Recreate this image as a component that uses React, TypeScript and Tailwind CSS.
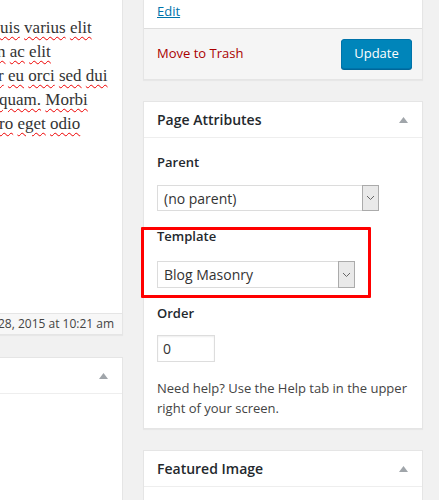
import React from "react";

const sans = { fontFamily: '"Open Sans", "Noto Sans", sans-serif' };
const serif = { fontFamily: '"Liberation Serif", "DejaVu Serif", serif' };

function Words({ text }: { text: string }) {
  const parts = text.split(" ");
  return (
    <>
      {parts.map((w, i) => (
        <React.Fragment key={i}>
          <span className="underline decoration-wavy decoration-[#e00] decoration-1 underline-offset-[3px]">{w}</span>
          {i < parts.length - 1 ? " " : ""}
        </React.Fragment>
      ))}
    </>
  );
}

function Triangle() {
  return (
    <svg width="9" height="6" viewBox="0 0 9 6" className="block">
      <path d="M4.5 0 L9 6 L0 6 Z" fill="#a0a5aa" />
    </svg>
  );
}

function Chevron() {
  return (
    <svg width="9" height="6" viewBox="0 0 9 6" className="block">
      <path d="M1 1 L4.5 4.5 L8 1" fill="none" stroke="#666" strokeWidth="1" />
    </svg>
  );
}

function Select({ label, w, h }: { label: string; w: string; h: string }) {
  return (
    <div className={`flex ${w} ${h} border border-[#dcdcdc] bg-white`}>
      <div className="flex-1 flex items-center pl-[6px] text-[14px] text-[#333]">{label}</div>
      <div className="w-[17px] flex items-center justify-center bg-[#e9e9e9] border border-[#ababab] -my-px -mr-px">
        <Chevron />
      </div>
    </div>
  );
}

export default function App() {
  return (
    <div className="w-[439px] h-[500px] overflow-hidden bg-[#f1f1f1] flex" style={sans}>
      {/* Left column */}
      <div className="w-[123px] flex flex-col shrink-0">
        <div className="h-[313px] bg-white border-r border-[#e5e5e5] pt-[16px] text-[17px] leading-[24px] text-[#333] whitespace-nowrap overflow-hidden" style={serif}>
          <div><Words text="uis varius elit" /></div>
          <div className="ml-[-3px]"><Words text="n ac elit" /></div>
          <div className="ml-[-2px]"><Words text="r eu orci sed dui" /></div>
          <div className="ml-[-1px]"><Words text="quam. Morbi" /></div>
          <div className="ml-[-1px]"><Words text="ro eget odio" /></div>
        </div>
        <div className="h-[22px] bg-[#f7f7f7] border-t border-b border-r border-[#e5e5e5] flex items-center overflow-hidden whitespace-nowrap text-[12px] text-[#444] shadow-[0_1px_1px_rgba(0,0,0,0.04)]">
          <span className="ml-[-2px]">28, 2015 at 10:21 am</span>
        </div>
        <div className="mt-[22px] flex-1 bg-white border-t border-r border-[#e5e5e5]">
          <div className="h-[36px] border-b border-[#eee] flex items-center justify-end pr-[14px]">
            <Triangle />
          </div>
        </div>
      </div>

      {/* Right column */}
      <div className="w-[280px] ml-[20px] shrink-0 flex flex-col">
        {/* Publish box bottom */}
        <div className="border-l border-r border-b border-[#e5e5e5] shadow-[0_1px_1px_rgba(0,0,0,0.04)]">
          <div className="h-[28px] bg-white pl-[13px] pt-[3px] text-[13px] leading-[16px]">
            <a className="text-[#0073aa] underline">Edit</a>
          </div>
          <div className="bg-[#f5f5f5] border-t border-[#ddd] pt-[10px] pb-[10px] pl-[13px] pr-[10px] flex items-center justify-between">
            <span className="text-[13px] text-[#a00]">Move to Trash</span>
            <button className="w-[71px] h-[30px] rounded-[3px] bg-[#0085ba] border border-[#0073aa] text-white text-[13px] shadow-[0_1px_0_#006799]">
              Update
            </button>
          </div>
        </div>

        {/* Page Attributes */}
        <div className="mt-[21px] bg-white border border-[#e5e5e5] shadow-[0_1px_1px_rgba(0,0,0,0.04)]">
          <div className="h-[36px] border-b border-[#eee] flex items-center justify-between pl-[13px] pr-[14px]">
            <span className="text-[14px] font-semibold text-[#23282d]">Page Attributes</span>
            <Triangle />
          </div>
          <div className="pl-[13px] pb-[10px]">
            <div className="mt-[15px] text-[13px] leading-[18px] font-semibold text-[#23282d]">Parent</div>
            <div className="mt-[14px]">
              <Select label="(no parent)" w="w-[222px]" h="h-[26px]" />
            </div>
            <div className="relative mt-[16px]">
              <div className="text-[13px] leading-[18px] font-semibold text-[#23282d]">Template</div>
              <div className="mt-[16px]">
                <Select label="Blog Masonry" w="w-[198px]" h="h-[27px]" />
              </div>
              <div className="absolute top-0 left-[-16px] w-[230px] h-[71px] border-[3px] border-[#f00] rounded-[1px] pointer-events-none" />
            </div>
            <div className="mt-[16px] text-[13px] leading-[18px] font-semibold text-[#23282d]">Order</div>
            <div className="mt-[13px] w-[58px] h-[27px] border border-[#ddd] shadow-[inset_0_1px_2px_rgba(0,0,0,0.07)] flex items-center pl-[5px] text-[14px] text-[#333]">
              0
            </div>
            <p className="mt-[16px] text-[13px] leading-[20px] text-[#444] pr-[10px]">
              Need help? Use the Help tab in the upper right of your screen.
            </p>
          </div>
        </div>

        {/* Featured Image */}
        <div className="mt-[21px] flex-1 bg-white border-t border-l border-r border-[#e5e5e5]">
          <div className="h-[36px] border-b border-[#eee] flex items-center justify-between pl-[13px] pr-[14px]">
            <span className="text-[14px] font-semibold text-[#23282d]">Featured Image</span>
            <Triangle />
          </div>
        </div>
      </div>
    </div>
  );
}
